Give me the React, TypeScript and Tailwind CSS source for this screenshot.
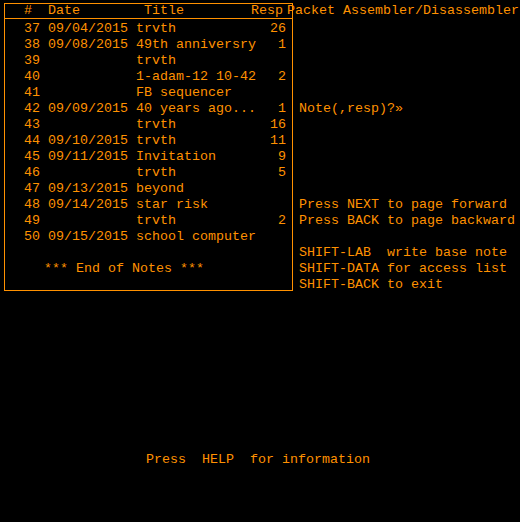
type Note = { n: number; date: string; title: string; resp: string };

const notes: Note[] = [
  { n: 37, date: '09/04/2015', title: 'trvth', resp: '26' },
  { n: 38, date: '09/08/2015', title: '49th anniversry', resp: '1' },
  { n: 39, date: '', title: 'trvth', resp: '' },
  { n: 40, date: '', title: '1-adam-12 10-42', resp: '2' },
  { n: 41, date: '', title: 'FB sequencer', resp: '' },
  { n: 42, date: '09/09/2015', title: '40 years ago...', resp: '1' },
  { n: 43, date: '', title: 'trvth', resp: '16' },
  { n: 44, date: '09/10/2015', title: 'trvth', resp: '11' },
  { n: 45, date: '09/11/2015', title: 'Invitation', resp: '9' },
  { n: 46, date: '', title: 'trvth', resp: '5' },
  { n: 47, date: '09/13/2015', title: 'beyond', resp: '' },
  { n: 48, date: '09/14/2015', title: 'star risk', resp: '' },
  { n: 49, date: '', title: 'trvth', resp: '2' },
  { n: 50, date: '09/15/2015', title: 'school computer', resp: '' },
];

// right hand help text, one entry per 16px line
const help = [
  '',
  '',
  '',
  '',
  '',
  'Note(,resp)?»',
  '',
  '',
  '',
  '',
  '',
  'Press NEXT to page forward',
  'Press BACK to page backward',
  '',
  'SHIFT-LAB  write base note',
  'SHIFT-DATA for access list',
  'SHIFT-BACK to exit',
];

export default function App() {
  return (
    <div className="w-[520px] h-[522px] overflow-hidden bg-black text-[#ff9100] font-['Liberation_Mono',monospace] text-[13.33px] leading-4 whitespace-pre flex flex-col pt-[3px]">
      <div className="flex">
        {/* notes list */}
        <div className="ml-[4px] w-[289px] h-[288px] shrink-0 border border-[#ff9100] flex flex-col">
          <div className="h-[15px] leading-[14px] border-b border-[#ff9100] flex pl-[19px] pr-[6px]">
            <span className="w-[24px] shrink-0">#</span>
            <span className="w-[88px] shrink-0">Date</span>
            <span className="flex-1 min-w-0 pl-2">Title</span>
            <span className="shrink-0 pr-[3px]">Resp</span>
          </div>
          <div className="flex flex-col pt-[2px]">
            {notes.map((note) => (
              <div key={note.n} className="h-4 flex pl-[19px] pr-[6px]">
                <span className="w-[24px] shrink-0">{note.n}</span>
                <span className="w-[88px] shrink-0">{note.date}</span>
                <span className="flex-1 min-w-0">{note.title}</span>
                <span className="w-[16px] shrink-0 text-right">{note.resp}</span>
              </div>
            ))}
            <div className="h-4" />
            <div className="h-4 pl-[39px]">*** End of Notes ***</div>
          </div>
        </div>

        {/* prompts */}
        <div className="flex flex-col pl-[6px]">
          <div className="h-[18px] -ml-[12px]">Packet Assembler/Disassembler</div>
          {help.map((line, i) => (
            <div key={i} className="h-4">
              {line}
            </div>
          ))}
        </div>
      </div>

      <div className="mt-[159px] h-4 pl-[146px]">Press  HELP  for information</div>
    </div>
  );
}
